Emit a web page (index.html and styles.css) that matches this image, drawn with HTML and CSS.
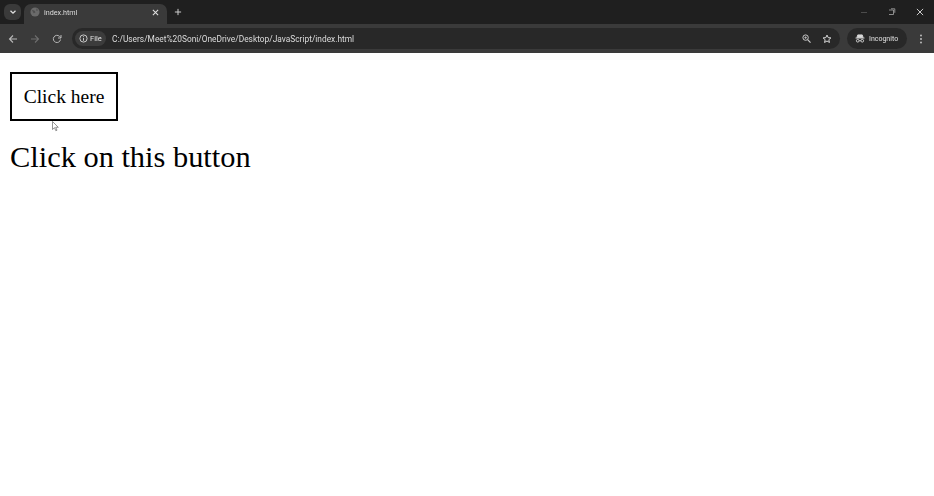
FILE: index.html
```html
<!DOCTYPE html>
<html lang="en">
<head>
<meta charset="utf-8">
<title>index.html</title>
<link rel="stylesheet" href="styles.css">
</head>
<body>
<header class="chrome">
  <div class="tabstrip">
    <div class="tabsearch">
      <svg width="10" height="10" viewBox="0 0 10 10"><path d="M2.500 3.800 5 6.200l2.500-2.400" fill="none" stroke="#e0e0e0" stroke-width="1.300"/></svg>
    </div>
    <div class="tab">
      <svg class="favicon" width="10" height="10" viewBox="0 0 11 11"><circle cx="5.500" cy="5.500" r="5" fill="#6a6a6a"/><path d="M2 3l3 1 1 2-2 1zM7 1.500l2 2-2 1z" fill="#4f4f4f"/></svg>
      <span class="tabtitle">index.html</span>
      <svg class="tabclose" width="7" height="7" viewBox="0 0 8 8"><path d="M1 1l6 6M7 1 1 7" stroke="#e0e0e0" stroke-width="1.200"/></svg>
    </div>
    <svg class="newtab" width="8" height="8" viewBox="0 0 9 9"><path d="M4.500 1v7M1 4.500h7" stroke="#d0d0d0" stroke-width="1.100"/></svg>
    <div class="winctrls">
      <svg width="8" height="8" viewBox="0 0 8 8"><path d="M1 4.500h6" stroke="#4c4c4c" stroke-width="1"/></svg>
      <svg width="8" height="8" viewBox="0 0 8 8"><path d="M1 6.500h4.500V2H1M3 .8h3.800v4" fill="none" stroke="#a8a8a8" stroke-width=".8"/></svg>
      <svg width="8" height="8" viewBox="0 0 9 9"><path d="M1 1l7 7M8 1 1 8" stroke="#e0e0e0" stroke-width="1"/></svg>
    </div>
  </div>
  <div class="toolbar">
    <svg class="navicon" width="10" height="10" viewBox="0 0 10 10"><path d="M9 5H1.500M5 1.500 1.500 5 5 8.500" fill="none" stroke="#b8b8b8" stroke-width="1.100"/></svg>
    <svg class="navicon" width="10" height="10" viewBox="0 0 10 10"><path d="M1 5h7.500M5 1.500 8.500 5 5 8.500" fill="none" stroke="#6e6e6e" stroke-width="1.100"/></svg>
    <svg class="navicon" width="10" height="10" viewBox="0 0 10 10"><path d="M8.500 5.500A3.600 3.600 0 1 1 7.500 2.400L9 3.800M9 1v3H6" fill="none" stroke="#b8b8b8" stroke-width="1"/></svg>
    <div class="omnibox">
      <div class="filechip">
        <svg width="9" height="9" viewBox="0 0 10 10"><circle cx="5" cy="5" r="4" fill="none" stroke="#d8d8d8" stroke-width="1"/><path d="M5 4.500v3M5 2.500v1" stroke="#d8d8d8" stroke-width="1"/></svg>
        <span class="filelabel">File</span>
      </div>
      <span class="url">C:/Users/Meet%20Soni/OneDrive/Desktop/JavaScript/index.html</span>
      <svg class="zoomicon" width="9" height="9" viewBox="0 0 10 10"><circle cx="4" cy="4" r="3" fill="none" stroke="#c8c8c8" stroke-width="1.100"/><path d="M6.200 6.200 9.500 9.500" stroke="#c8c8c8" stroke-width="1.300"/><path d="M2.500 4h3M4 2.500v3" stroke="#c8c8c8" stroke-width=".8"/></svg>
      <svg class="staricon" width="10" height="10" viewBox="0 0 11 11"><path d="M5.500 1.200 6.800 4l3 .3-2.300 2 .7 3-2.700-1.600-2.700 1.600.7-3-2.300-2 3-.3z" fill="none" stroke="#d8d8d8" stroke-width="1.100"/></svg>
    </div>
    <div class="incognito">
      <svg width="10" height="9" viewBox="0 0 11 10"><path d="M3 1h5l1 3H2zM.5 4.500h10" fill="#d8d8d8" stroke="#d8d8d8" stroke-width="1"/><circle cx="3" cy="7.500" r="1.500" fill="none" stroke="#d8d8d8"/><circle cx="8" cy="7.500" r="1.500" fill="none" stroke="#d8d8d8"/><path d="M4.500 7.500h2" stroke="#d8d8d8"/></svg>
      <span class="inclabel">Incognito</span>
    </div>
    <svg class="menuicon" width="4" height="10" viewBox="0 0 4 10"><circle cx="2" cy="1.500" r=".9" fill="#c8c8c8"/><circle cx="2" cy="5" r=".9" fill="#c8c8c8"/><circle cx="2" cy="8.500" r=".9" fill="#c8c8c8"/></svg>
  </div>
</header>
<main class="page">
  <button class="btn" type="button">Click here</button>
  <h1 class="msg">Click on this button</h1>
  <svg class="cursor" width="7" height="11" viewBox="0 0 7 11"><path d="M.5.500v8l2-1.800 1.300 3 1.200-.5-1.300-2.900h2.600z" fill="#fff" stroke="#666" stroke-width=".7"/></svg>
</main>
</body>
</html>
```
FILE: styles.css
```css
* { box-sizing: border-box; }
html, body { margin: 0; height: 100%; background: #fff; }
body { overflow: hidden; position: relative; }
.chrome { font-family: "Roboto", "Liberation Sans", sans-serif; color: #e0e0e0; }
.tabstrip { height: 24px; background: #1f1f1f; display: flex; align-items: flex-start; padding: 4px 0 0 4px; }
.tabsearch { width: 17px; height: 16px; background: #3a3a3a; border-radius: 6px; display: flex; align-items: center; justify-content: center; }
.tab { width: 143px; height: 20px; margin-left: 3px; background: #3a3a3a; border-radius: 7px 7px 0 0; display: flex; align-items: center; padding: 0 8px 4px 6px; }
.favicon { flex: none; }
.tabtitle, .filelabel, .url, .inclabel { will-change: transform; }
.tabtitle { margin-left: 4px; font-size: 7.200px; flex: 1; color: #dcdcdc; }
.tabclose { flex: none; }
.newtab { margin: 4px 0 0 7px; flex: none; }
.winctrls { margin-left: auto; display: flex; gap: 20px; padding: 4px 10px 0 0; align-items: center; }
.toolbar { height: 29px; background: #3a3a3a; display: flex; align-items: center; padding: 0 9px 0 8px; }
.navicon { flex: none; margin-right: 12px; }
.navicon:nth-child(3) { margin-right: 10px; }
.omnibox { width: 768px; height: 21px; background: #282828; border-radius: 11px; display: flex; align-items: center; padding: 0 8px 0 3px; }
.filechip { height: 15px; width: 31px; background: #3c3c3c; border-radius: 8px; display: flex; align-items: center; justify-content: center; gap: 2px; font-size: 7.500px; flex: none; }
.url { margin-left: 6px; font-size: 8.350px; color: #dcdcdc; flex: 1; white-space: nowrap; }
.zoomicon { flex: none; margin-right: 11px; }
.staricon { flex: none; }
.incognito { width: 60px; height: 21px; margin-left: 7px; background: #282828; border-radius: 11px; display: flex; align-items: center; justify-content: center; gap: 4px; font-size: 7px; flex: none; }
.menuicon { flex: none; margin-left: 12px; }
.page { padding: 19px 10px 0; height: 443px; position: relative; background: #fff; }
.btn { display: block; width: 108px; height: 49px; padding: 1px 0 0; background: #fff; border: 2px solid #000; font-family: "Liberation Serif", serif; font-size: 19.500px; color: #000; border-radius: 0; }
.msg { margin: 18px 0 0; font-family: "Liberation Serif", serif; font-weight: 400; font-size: 30.400px; line-height: 37px; color: #000; }
.cursor { position: absolute; left: 52px; top: 68px; }
```
